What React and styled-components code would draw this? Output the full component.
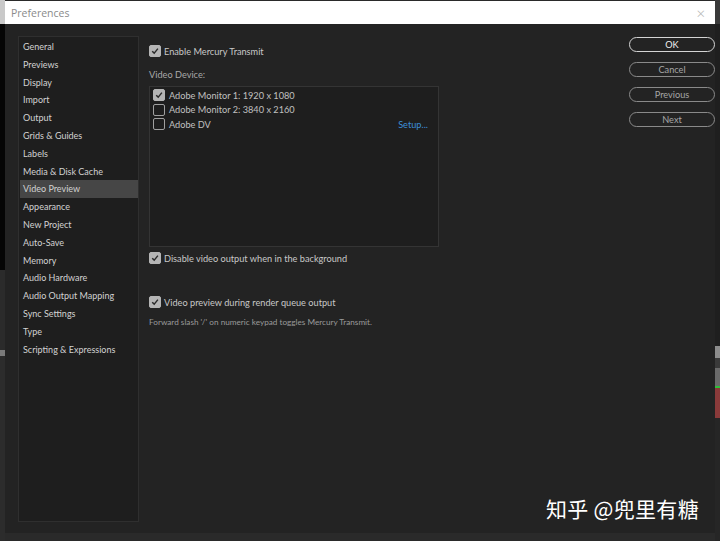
import React from "react";
import styled, { createGlobalStyle } from "styled-components";

const Global = createGlobalStyle`
  html, body {
    margin: 0;
    padding: 0;
    background: #262626;
    overflow: hidden;
  }
  body {
    font-family: "Lato", "Open Sans", sans-serif;
  }
`;

const Screen = styled.div`
  width: 720px;
  height: 541px;
  display: flex;
  background: #2a2a2a;
`;

const Edge = styled.div`
  width: 5px;
  display: flex;
  flex-direction: column;
`;

const EdgeBand = styled.div`
  height: ${(p) => p.h}px;
  background: ${(p) => p.c};
  flex-shrink: 0;
`;

const Window = styled.div`
  width: 710px;
  display: flex;
  flex-direction: column;
  padding-top: 1px;
`;

const TitleBar = styled.div`
  height: 23px;
  background: #ffffff;
  display: flex;
  align-items: center;
  justify-content: space-between;
  padding: 0 10px 0 6px;
  font-family: "Open Sans", sans-serif;
  font-size: 10.5px;
  color: #8a8a8a;
`;

const CloseX = styled.span`
  font-size: 15px;
  color: #b4b4b4;
  font-weight: 300;
`;

const Body = styled.div`
  height: 509px;
  background: #232323;
  display: flex;
  padding: 12px 0 0 13px;
  box-sizing: border-box;
`;

const Sidebar = styled.div`
  width: 121px;
  height: 486px;
  background: #1e1e1e;
  border: 1px solid #2f2f2f;
  box-sizing: border-box;
  padding: 1px 0 1px 1px;
  display: flex;
  flex-direction: column;
`;

const NavItem = styled.div`
  height: 17.8px;
  line-height: 17.8px;
  padding-left: 3px;
  font-size: 9px;
  color: #d2d2d2;
  white-space: nowrap;
  background: ${(p) => (p.active ? "#464646" : "transparent")};
`;

const Content = styled.div`
  width: 290px;
  margin-left: 10px;
  padding-top: 8px;
  display: flex;
  flex-direction: column;
`;

const CheckRow = styled.label`
  display: flex;
  align-items: center;
  gap: 3px;
  height: 14px;
  font-size: 9.2px;
  color: #c8c8c8;
  margin-top: ${(p) => p.mt || 0}px;
  white-space: nowrap;
`;

const Box = styled.span`
  width: 10px;
  height: 10px;
  border-radius: 2px;
  background: ${(p) => (p.on ? "#b5b5b5" : "transparent")};
  border: 1px solid ${(p) => (p.on ? "#b5b5b5" : "#a0a0a0")};
  display: flex;
  align-items: center;
  justify-content: center;
  flex-shrink: 0;
`;

const Label = styled.div`
  font-size: 9.2px;
  color: #a8a8a8;
  margin-top: 10px;
  height: 14px;
  line-height: 14px;
`;

const DeviceList = styled.div`
  margin-top: 4px;
  height: 161px;
  background: #1e1e1e;
  border: 1px solid #343434;
  box-sizing: border-box;
  padding: 1px 0 0 3px;
  display: flex;
  flex-direction: column;
`;

const DeviceRow = styled.div`
  display: flex;
  align-items: center;
  gap: 4px;
  height: 14.5px;
  font-size: 9.2px;
  color: #c0c0c0;
  padding-right: 10px;
`;

const SetupLink = styled.span`
  margin-left: auto;
  color: #3d8ed8;
`;

const Note = styled.div`
  font-size: 8.2px;
  color: #9a9a9a;
  margin-top: 8px;
  white-space: nowrap;
`;

const Spacer = styled.div`
  flex: 1;
`;

const Buttons = styled.div`
  width: 86px;
  padding-top: 1px;
  display: flex;
  flex-direction: column;
  gap: 10px;
`;

const PillButton = styled.button`
  height: 15px;
  width: 86px;
  border-radius: 8px;
  border: 1px solid ${(p) => (p.primary ? "#d4d4d4" : "#8a8a8a")};
  background: transparent;
  color: ${(p) => (p.primary ? "#f0f0f0" : "#a6a6a6")};
  font-family: "Lato", "Open Sans", sans-serif;
  font-size: 9.2px;
  padding: 0;
  line-height: 13px;
`;

const Watermark = styled.div`
  position: absolute;
  left: 546px;
  top: 493px;
  font-family: "Noto Sans CJK SC", sans-serif;
  font-size: 21px;
  color: #ffffff;
  letter-spacing: 0.3px;
`;

const Check = () => (
  <svg width="8" height="8" viewBox="0 0 8 8">
    <path d="M1.2 4.2 L3.2 6.1 L6.9 1.6" stroke="#2a2a2a" strokeWidth="1.4" fill="none" />
  </svg>
);

const Checkbox = ({ on }) => <Box on={on}>{on && <Check />}</Box>;

const nav = [
  "General",
  "Previews",
  "Display",
  "Import",
  "Output",
  "Grids & Guides",
  "Labels",
  "Media & Disk Cache",
  "Video Preview",
  "Appearance",
  "New Project",
  "Auto-Save",
  "Memory",
  "Audio Hardware",
  "Audio Output Mapping",
  "Sync Settings",
  "Type",
  "Scripting & Expressions",
];

const leftBands = [
  { h: 24, c: "#c9c9c9" },
  { h: 246, c: "#050505" },
  { h: 80, c: "#2b2b2b" },
  { h: 6, c: "#7a7a7a" },
  { h: 185, c: "#2c2c2c" },
];

const rightBands = [
  { h: 24, c: "#3a3a3a" },
  { h: 322, c: "#1f1f1f" },
  { h: 12, c: "#8c8c8c" },
  { h: 10, c: "#3a3a3a" },
  { h: 18, c: "#6a6a6a" },
  { h: 2, c: "#2fbf3a" },
  { h: 30, c: "#8a3a3a" },
  { h: 123, c: "#262626" },
];

export default function App() {
  return (
    <>
      <Global />
      <Screen>
        <Edge>
          {leftBands.map((b, i) => (
            <EdgeBand key={i} h={b.h} c={b.c} />
          ))}
        </Edge>
        <Window>
          <TitleBar>
            <span>Preferences</span>
            <CloseX>×</CloseX>
          </TitleBar>
          <Body>
            <Sidebar>
              {nav.map((n) => (
                <NavItem key={n} active={n === "Video Preview"}>
                  {n}
                </NavItem>
              ))}
            </Sidebar>
            <Content>
              <CheckRow>
                <Checkbox on />
                Enable Mercury Transmit
              </CheckRow>
              <Label>Video Device:</Label>
              <DeviceList>
                <DeviceRow>
                  <Checkbox on />
                  Adobe Monitor 1: 1920 x 1080
                </DeviceRow>
                <DeviceRow>
                  <Checkbox />
                  Adobe Monitor 2: 3840 x 2160
                </DeviceRow>
                <DeviceRow>
                  <Checkbox />
                  Adobe DV
                  <SetupLink>Setup...</SetupLink>
                </DeviceRow>
              </DeviceList>
              <CheckRow mt={4}>
                <Checkbox on />
                Disable video output when in the background
              </CheckRow>
              <CheckRow mt={30}>
                <Checkbox on />
                Video preview during render queue output
              </CheckRow>
              <Note>Forward slash '/' on numeric keypad toggles Mercury Transmit.</Note>
            </Content>
            <Spacer />
            <Buttons>
              <PillButton primary>OK</PillButton>
              <PillButton>Cancel</PillButton>
              <PillButton>Previous</PillButton>
              <PillButton>Next</PillButton>
            </Buttons>
          </Body>
          <Watermark>知乎 @兜里有糖</Watermark>
        </Window>
        <Edge>
          {rightBands.map((b, i) => (
            <EdgeBand key={i} h={b.h} c={b.c} />
          ))}
        </Edge>
      </Screen>
    </>
  );
}
